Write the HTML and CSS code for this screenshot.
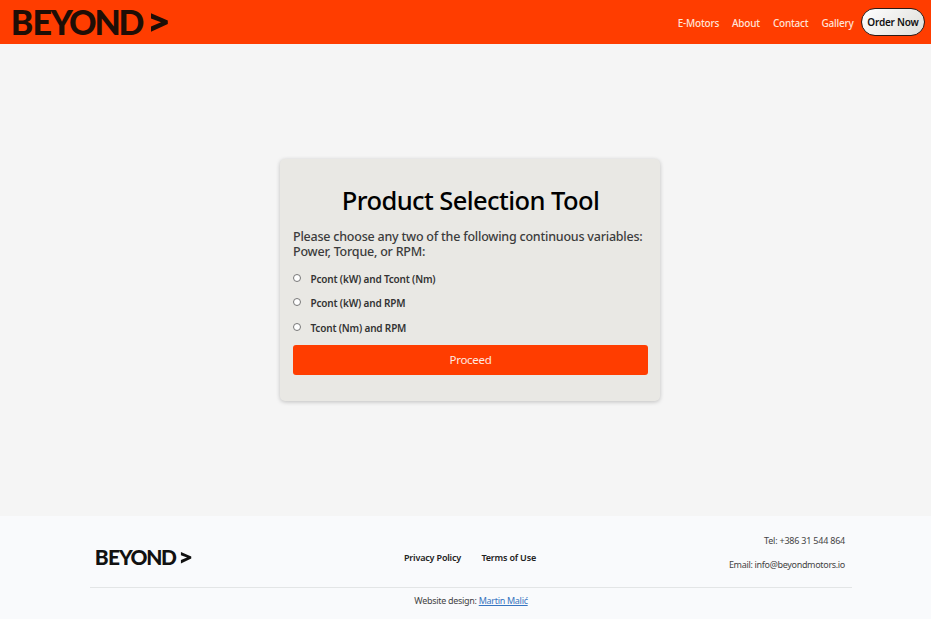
FILE: index.html
```html
<!DOCTYPE html>
<html lang="en">
<head>
<meta charset="utf-8">
<title>Beyond Motors - Product Selection Tool</title>
<link rel="stylesheet" href="styles.css">
</head>
<body>
<header class="header">
  <a class="logo" href="#">
    <svg viewBox="0 0 156 26" role="img" aria-label="Beyond">
      <text x="-2.2 19.5 37.5 56 81.5 105.5" y="25">BEYOND</text>
      <path d="M138 3.2 L154.8 10.5 V14 L138 21.8 V16.4 L148 12.3 L138 8.5 Z" />
    </svg>
  </a>
  <nav class="nav">
    <a href="#">E-Motors</a>
    <a href="#">About</a>
    <a href="#">Contact</a>
    <a href="#">Gallery</a>
    <a class="order" href="#">Order Now</a>
  </nav>
</header>
<main class="main">
  <form class="card">
    <h1>Product Selection Tool</h1>
    <div class="lead">
      <p>Please choose any two of the following continuous variables:</p>
      <p>Power, Torque, or RPM:</p>
    </div>
    <label class="option"><input type="radio" name="variables"><span>Pcont (kW) and Tcont (Nm)</span></label>
    <label class="option"><input type="radio" name="variables"><span>Pcont (kW) and RPM</span></label>
    <label class="option"><input type="radio" name="variables"><span>Tcont (Nm) and RPM</span></label>
    <button type="button">Proceed</button>
  </form>
</main>
<footer class="footer">
  <div class="footer-top">
    <a class="logo logo-small" href="#">
      <svg viewBox="0 0 156 26" role="img" aria-label="Beyond">
        <text x="-2.2 19.5 37.5 56 81.5 105.5" y="25">BEYOND</text>
        <path d="M138 3.2 L154.8 10.5 V14 L138 21.8 V16.4 L148 12.3 L138 8.5 Z" />
      </svg>
    </a>
    <nav class="legal">
      <a href="#">Privacy Policy</a>
      <a href="#">Terms of Use</a>
    </nav>
    <div class="contact">
      <p class="tel">Tel: +386 31 544 864</p>
      <p class="email">Email: info@beyondmotors.io</p>
    </div>
  </div>
  <p class="credit">Website design: <a href="#">Martin Malić</a></p>
</footer>
</body>
</html>
```
FILE: styles.css
```css
* { box-sizing: border-box; }
body {
  margin: 0;
  height: 619px;
  display: flex;
  flex-direction: column;
  overflow: hidden;
  background: #f5f5f5;
  font-family: "Noto Sans", "Open Sans", sans-serif;
  color: #333;
}
h1, p { margin: 0; }
a { color: inherit; text-decoration: none; white-space: nowrap; }

.header {
  height: 44.4px;
  flex: none;
  display: flex;
  align-items: flex-start;
  justify-content: space-between;
  padding: 8px 6px 0 13px;
  background: #ff3d00;
}
.logo { display: block; width: 156px; color: #1e0e06; }
.header .logo { margin-top: 1.5px; }
.logo svg { display: block; width: 100%; overflow: visible; }
.logo text {
  font: 900 34px Lato, sans-serif;
  fill: currentColor;
}
.logo path { fill: currentColor; }
.logo-small { width: 96px; margin-left: 1px; color: #111; }

.nav {
  display: flex;
  align-items: center;
  gap: 13px;
  font-size: 10px;
  font-weight: 500;
  letter-spacing: -.22px;
  color: #ffe3d8;
}
.nav a { padding-top: 1px; }
.nav .order {
  width: 64px;
  height: 28px;
  margin-left: -5.5px;
  border: 1.5px solid #2b1a16;
  border-radius: 14px;
  background: linear-gradient(135deg, #fff, #dededa);
  color: #111;
  font-weight: 600;
  line-height: 25px;
  text-align: center;
}

.main {
  height: 472px;
  flex: none;
  display: flex;
  align-items: center;
  justify-content: center;
  padding: 0 0 1px 9px;
}
.card {
  width: 380px;
  height: 242px;
  padding: 21px 12px 0 13px;
  background: #e9e8e4;
  border-radius: 5px;
  box-shadow: 0 1px 4px rgba(0, 0, 0, .22);
}
.card h1 {
  color: #000;
  font-size: 25.5px;
  font-weight: 500;
  line-height: 40px;
  letter-spacing: -.58px;
  text-align: center;
  white-space: nowrap;
}
.lead {
  margin: 9px 0 12px;
  font-size: 12.5px;
  font-weight: 500;
  line-height: 15px;
  letter-spacing: -.22px;
  color: #3c3c3c;
  white-space: nowrap;
}
.option {
  display: flex;
  align-items: center;
  height: 16px;
  margin-bottom: 8.6px;
  font-size: 10px;
  font-weight: 600;
  letter-spacing: -.17px;
}
.option input {
  appearance: none;
  width: 8px;
  height: 8px;
  margin: -2px 9.5px 0 0;
  border: 1px solid #777;
  border-radius: 50%;
  background: #fff;
}
.card button {
  display: block;
  width: 100%;
  height: 30px;
  padding: 0;
  border: 0;
  border-radius: 3px;
  background: #ff3d00;
  color: #ffe9e0;
  font: 400 11.5px "Noto Sans", sans-serif;
  letter-spacing: -.3px;
}

.footer {
  flex: 1;
  padding: 0 79px 0 90px;
  background: #f9fafc;
}
.footer-top {
  display: grid;
  grid-template-columns: 1fr 132px 1fr;
  align-items: center;
  height: 71.5px;
  padding: 12.5px 7px 0 5px;
  border-bottom: 1px solid #e3e5e6;
}
.legal {
  display: flex;
  justify-content: space-between;
  font-size: 9px;
  font-weight: 600;
  letter-spacing: -.18px;
  color: #222;
}
.contact {
  justify-self: end;
  margin-top: -10px;
  font-size: 9px;
  line-height: 23.5px;
  text-align: right;
  color: #444;
}
.tel { letter-spacing: -.22px; }
.email { letter-spacing: -.32px; }
.credit {
  margin-top: 6.5px;
  font-size: 9px;
  line-height: 14px;
  letter-spacing: -.3px;
  text-align: center;
  color: #444;
}
.credit a { color: #3674c0; text-decoration: underline; }
```
